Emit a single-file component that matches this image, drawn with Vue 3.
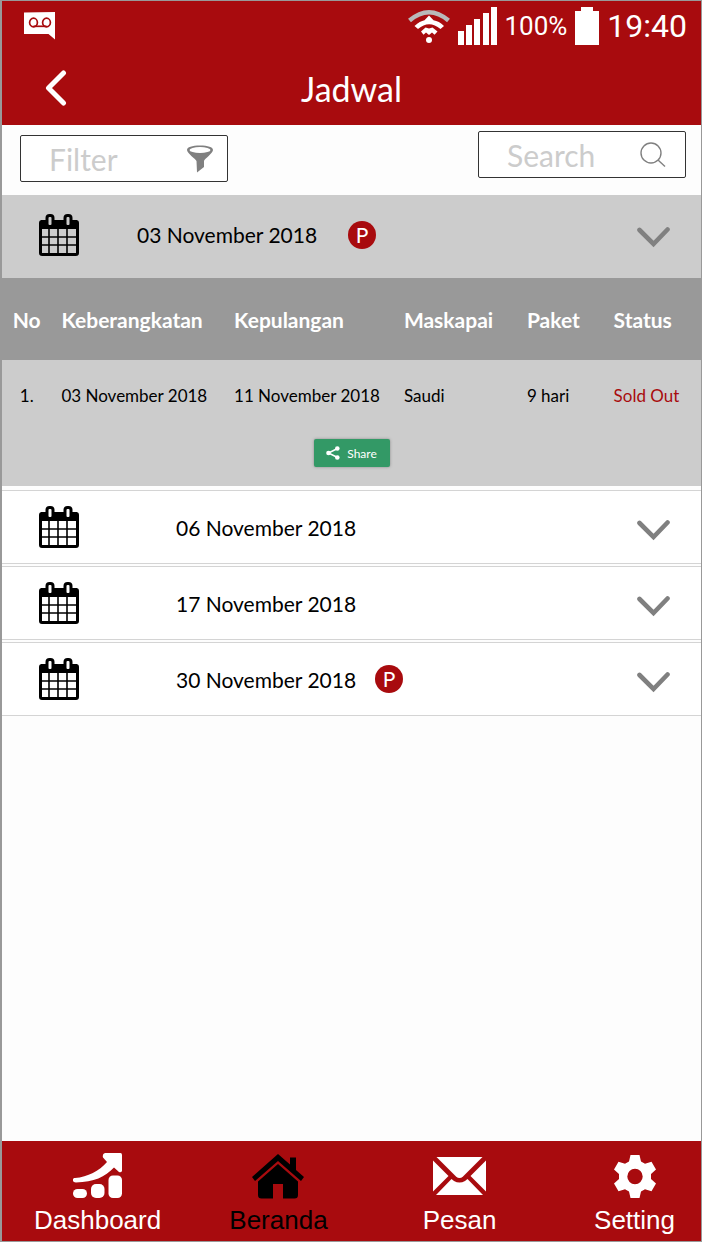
<script setup>
import { ref } from 'vue'

const query = ref('')
const openIndex = ref(0)

const columns = ['No', 'Keberangkatan', 'Kepulangan', 'Maskapai', 'Paket', 'Status']

const schedules = [
  {
    date: '03 November 2018',
    promo: true,
    trips: [['1.', '03 November 2018', '11 November 2018', 'Saudi', '9 hari', 'Sold Out']],
  },
  { date: '06 November 2018', promo: false, trips: [] },
  { date: '17 November 2018', promo: false, trips: [] },
  { date: '30 November 2018', promo: true, trips: [] },
]

function toggle(i) {
  openIndex.value = openIndex.value === i ? -1 : i
}
</script>

<template>
  <div class="screen">
    <header class="top">
      <div class="status">
        <svg class="voicemail" viewBox="0 0 31 28" aria-hidden="true">
          <path d="M0 0.5L31 0V27.5L24.500 22H0Z" fill="#fff" />
          <g fill="none" stroke="#a80b0e" stroke-width="1.700">
            <ellipse cx="9.500" cy="10.500" rx="3.900" ry="4.300" />
            <ellipse cx="22.500" cy="10.500" rx="3.900" ry="4.300" />
            <path d="M9.500 14.300H22.500" />
          </g>
        </svg>
        <div class="status-right">
          <svg class="wifi" viewBox="0 0 42 34" aria-hidden="true">
            <path d="M1.500 11.500Q21 -5 40.500 11.500" fill="none" stroke="#b9b9b9" stroke-width="4.500" />
            <path d="M6.500 17Q12 12 16.500 11.200L21 6.500L25.500 11.200Q31 12 36 17L32.500 20Q21 10.500 10 20Z" fill="#fff" />
            <path d="M13 22.500L17.500 18.500L21 19.500L24.500 18.500L29.500 22.500L26.500 25.800L24 23.500L21 26L18 23.500L15.500 25.800Z" fill="#fff" />
            <circle cx="21" cy="31" r="3" fill="#fff" />
          </svg>
          <svg class="signal" viewBox="0 0 39 38" fill="#fff" aria-hidden="true">
            <rect x="0" y="24" width="6" height="14" />
            <rect x="8" y="18" width="6" height="20" />
            <rect x="16" y="12" width="6" height="26" />
            <rect x="25" y="6" width="6" height="32" />
            <rect x="33" y="0" width="6" height="38" />
          </svg>
          <span class="percent">100%</span>
          <svg class="battery" viewBox="0 0 24 38" fill="#fff" aria-hidden="true">
            <path d="M6 0H18V4H24V38H0V4H6Z" />
          </svg>
          <span class="clock">19:40</span>
        </div>
      </div>
      <div class="title-bar">
        <button class="back" type="button" aria-label="Kembali">
          <svg viewBox="0 0 22 36" aria-hidden="true">
            <path d="M18.500 3L3.500 18L18.500 33" fill="none" stroke="#fff" stroke-width="5" stroke-linecap="round" stroke-linejoin="round" />
          </svg>
        </button>
        <h1>Jadwal</h1>
      </div>
    </header>

    <div class="tools">
      <button class="box filter" type="button">
        <span>Filter</span>
        <svg class="funnel" viewBox="0 0 26 28" aria-hidden="true">
          <path d="M0 5C0 2 5 0.500 13 0.500S26 2 26 5C26 8 17.500 14 17 16V22L10 27.500L9.500 16C8.500 14 0 8 0 5Z" fill="#808080" />
          <ellipse cx="13" cy="5" rx="10.500" ry="3" fill="#fff" />
        </svg>
      </button>
      <label class="box search">
        <input v-model="query" type="text" placeholder="Search" aria-label="Search" />
        <svg class="lens" viewBox="0 0 26 26" fill="none" stroke="#808080" stroke-width="1.400" aria-hidden="true">
          <circle cx="11" cy="11" r="10" />
          <path d="M18 18L25 24.500" />
        </svg>
      </label>
    </div>

    <main class="list">
      <section
        v-for="(item, i) in schedules"
        :key="item.date"
        class="item"
        :class="{ open: openIndex === i }"
      >
        <button class="row" type="button" :aria-expanded="openIndex === i" @click="toggle(i)">
          <svg class="calendar" viewBox="0 0 40 42" aria-hidden="true">
            <rect x="1" y="7" width="38" height="34" rx="2" fill="none" stroke="#000" stroke-width="2" />
            <path d="M2 6H38V15H2Z" fill="#000" />
            <path d="M2 15V40M38 15V40M2 40H38" stroke="#000" stroke-width="2" />
            <path d="M10 15V40M19 15V40M28 15V40M2 23H38M2 31H38" stroke="#000" stroke-width="1.600" />
            <rect x="6.500" y="0" width="9" height="13" rx="4" fill="#000" />
            <rect x="24.500" y="0" width="9" height="13" rx="4" fill="#000" />
            <rect class="ring" x="9.500" y="3" width="3" height="8" rx="1" />
            <rect class="ring" x="27.500" y="3" width="3" height="8" rx="1" />
          </svg>
          <span class="date">{{ item.date }}</span>
          <span v-if="item.promo" class="badge">P</span>
          <svg class="chevron" viewBox="0 0 33 21" aria-hidden="true">
            <path d="M2.500 3L16.500 17L30.500 2.500" fill="none" stroke="#808080" stroke-width="4.600" stroke-linecap="round" />
          </svg>
        </button>

        <div v-if="openIndex === i && item.trips.length" class="detail">
          <table>
            <colgroup>
              <col class="c-no" />
              <col class="c-out" />
              <col class="c-in" />
              <col class="c-air" />
              <col class="c-pack" />
              <col />
            </colgroup>
            <thead>
              <tr>
                <th v-for="c in columns" :key="c" scope="col">{{ c }}</th>
              </tr>
            </thead>
            <tbody>
              <tr v-for="trip in item.trips" :key="trip[0]">
                <td v-for="cell in trip" :key="cell">{{ cell }}</td>
              </tr>
            </tbody>
          </table>
          <button class="share" type="button">
            <svg viewBox="0 0 14 14" aria-hidden="true">
              <path d="M11.500 2.500L2.500 7L11.500 11.500" fill="none" stroke="#fff" stroke-width="1.500" />
              <circle cx="11.300" cy="2.500" r="2.300" fill="#fff" />
              <circle cx="2.500" cy="7" r="2.300" fill="#fff" />
              <circle cx="11.300" cy="11.500" r="2.300" fill="#fff" />
            </svg>
            <span>Share</span>
          </button>
        </div>
      </section>
    </main>

    <nav class="nav">
      <a href="#dashboard">
        <svg class="i-dash" viewBox="0 0 50 46" fill="#fff" aria-hidden="true">
          <rect x="0" y="36" width="14" height="9" rx="4.500" />
          <rect x="18" y="31" width="13.500" height="14" rx="5" />
          <rect x="35.500" y="22.500" width="13.500" height="22.500" rx="4.500" />
          <path d="M32 0H47.500Q49 0 49 2V18Q48 20 46 19L41 14.500C32 24 21 29 3 29.500C-1 29.500 -1 25 2 25C15 24 26 18 34 9L30 4.500Q29 1 32 0Z" />
        </svg>
        <span>Dashboard</span>
      </a>
      <a href="#beranda" class="active" aria-current="page">
        <svg class="i-home" viewBox="0 0 52 45" fill="#000" aria-hidden="true">
          <path d="M26 0L38 10.500V3.500H44V16L52 23L49 27L26 7L3 27L0 23Z" />
          <path d="M26 10L46 27.500V41Q46 44.500 42.500 44.500H31V30H21V44.500H9.500Q6 44.500 6 41V27.500Z" />
        </svg>
        <span>Beranda</span>
      </a>
      <a href="#pesan">
        <svg class="i-mail" viewBox="0 0 53 38" fill="#fff" aria-hidden="true">
          <path d="M3.500 0H49.500L30 19.500Q26.500 22.500 23 19.500Z" />
          <path d="M0 3.500L15.500 19L0 34.500Z" />
          <path d="M53 3.500L37.500 19L53 34.500Z" />
          <path d="M18.500 22L21 24Q26.500 27 32 24L34.500 22L50 38H3Z" />
        </svg>
        <span>Pesan</span>
      </a>
      <a href="#setting">
        <svg class="i-gear" viewBox="0 0 42 43" aria-hidden="true">
          <path fill="#fff" fill-rule="evenodd" d="M16.500 0H25.500L27 6.500L31 8.800L37.500 6.800L42 14.500L37 19V24L42 28.500L37.500 36.200L31 34.200L27 36.500L25.500 43H16.500L15 36.500L11 34.200L4.500 36.200L0 28.500L5 24V19L0 14.500L4.500 6.800L11 8.800L15 6.500ZM21 13.800A7.700 7.700 0 1 0 21 29.200A7.700 7.700 0 1 0 21 13.800Z" />
        </svg>
        <span>Setting</span>
      </a>
    </nav>
  </div>
</template>

<style>
body {
  margin: 0;
}
</style>

<style scoped>
.screen {
  box-sizing: border-box;
  min-height: 100vh;
  display: flex;
  flex-direction: column;
  border: 1px solid #999;
  border-left-width: 2px;
  background: #fdfdfd;
  color: #000;
  font-family: Lato, "Liberation Sans", sans-serif;
}
button {
  margin: 0;
  padding: 0;
  border: 0;
  background: none;
  color: inherit;
  font: inherit;
  cursor: pointer;
}
svg {
  display: block;
  flex: none;
}

.top {
  background: #a80b0e;
  color: #fff;
}
.status {
  display: flex;
  justify-content: space-between;
  align-items: center;
  height: 50px;
  padding: 0 14px 0 22px;
  font-family: Roboto, sans-serif;
}
.status-right {
  display: flex;
  align-items: center;
}
.voicemail {
  width: 31px;
  height: 28px;
}
.wifi {
  width: 42px;
  height: 34px;
  margin-right: 8px;
}
.signal {
  width: 39px;
  height: 38px;
  margin-right: 7px;
}
.battery {
  width: 24px;
  height: 38px;
  margin: 0 8px;
}
.percent {
  font-size: 26px;
}
.clock {
  font-size: 32px;
}
.title-bar {
  display: grid;
  grid-template-columns: 1fr auto 1fr;
  align-items: center;
  height: 74px;
}
.back {
  justify-self: start;
  margin-left: 43px;
}
.back svg {
  width: 22px;
  height: 36px;
}
h1 {
  margin: 0;
  font-size: 34px;
  font-weight: 400;
}

.tools {
  display: flex;
  justify-content: space-between;
  height: 70px;
  box-sizing: border-box;
  padding: 6px 15px 0 18px;
}
.box {
  display: flex;
  align-items: center;
  justify-content: space-between;
  box-sizing: border-box;
  width: 208px;
  height: 47px;
  border: 1px solid #333;
  border-radius: 2px;
  background: #fff;
  color: #ccc;
  font-size: 30px;
}
.filter {
  margin-top: 4px;
  padding: 0 14px 0 28px;
}
.search {
  padding: 0 19px 0 28px;
}
.search input {
  width: 100px;
  min-width: 0;
  padding: 0;
  border: 0;
  outline: 0;
  background: none;
  color: #333;
  font: inherit;
}
.search input::placeholder {
  color: #ccc;
  opacity: 1;
}
.funnel {
  width: 26px;
  height: 28px;
}
.lens {
  width: 26px;
  height: 26px;
}

.list {
  flex: 1;
  display: flex;
  flex-direction: column;
  gap: 2px;
}
.item {
  background: #fff;
  border: 1px solid #d4d4d4;
  border-width: 1px 0;
}
.item.open {
  margin-bottom: 2px;
  border: 0;
  background: #ccc;
}
.row {
  display: flex;
  align-items: center;
  width: 100%;
  height: 72px;
  padding: 0 31px 0 37px;
  text-align: left;
}
.open .row {
  height: 83px;
  padding-bottom: 4px;
}
.calendar {
  width: 40px;
  height: 42px;
  margin-right: 97px;
}
.open .calendar {
  margin-right: 58px;
}
.ring {
  fill: #fff;
}
.open .ring {
  fill: #ccc;
}
.date {
  font-size: 21px;
}
.badge {
  width: 28px;
  margin-left: 19px;
  border-radius: 50%;
  background: #a80b0e;
  color: #fff;
  font-size: 21px;
  line-height: 28px;
  text-align: center;
}
.open .badge {
  margin-left: 31px;
}
.chevron {
  width: 33px;
  height: 21px;
  margin: 6px 0 0 auto;
}

.detail {
  padding-bottom: 19px;
}
table {
  width: 100%;
  table-layout: fixed;
  border-collapse: collapse;
}
.c-no {
  width: 8.5%;
}
.c-out {
  width: 24.7%;
}
.c-in {
  width: 24.3%;
}
.c-air {
  width: 17.6%;
}
.c-pack {
  width: 12.4%;
}
th,
td {
  padding: 0;
  text-align: left;
  white-space: nowrap;
}
th {
  height: 82px;
  background: #999;
  color: #fff;
  font-size: 21px;
  font-weight: 700;
}
td {
  height: 70px;
  font-size: 17px;
}
th:first-child,
td:first-child {
  padding-right: 10px;
  text-align: center;
}
td:last-child {
  color: #a80b0e;
}
.share {
  display: flex;
  align-items: center;
  justify-content: center;
  gap: 7px;
  width: 76px;
  height: 28px;
  margin: 9px auto 0;
  border-radius: 2px;
  background: #339966;
  box-shadow: 0 0 3px #888;
  color: #fff;
  font-size: 12px;
}
.share svg {
  width: 14px;
  height: 14px;
}

.nav {
  display: grid;
  grid-template-columns: 196fr 194fr 172fr 78fr;
  justify-items: start;
  height: 100px;
  padding: 0 26px 0 32px;
  background: #a80b0e;
  font-family: "Liberation Sans", Arial, sans-serif;
  font-size: 26px;
  line-height: 30px;
}
.nav a {
  display: grid;
  grid-template-rows: 46px 30px;
  row-gap: 6px;
  align-content: start;
  align-items: center;
  justify-items: center;
  padding-top: 12px;
  color: #fff;
  text-decoration: none;
}
.nav .active {
  color: #000;
}
.i-dash {
  width: 50px;
  height: 46px;
}
.i-home {
  width: 52px;
  height: 45px;
}
.i-mail {
  width: 53px;
  height: 38px;
}
.i-gear {
  width: 42px;
  height: 43px;
}
</style>
